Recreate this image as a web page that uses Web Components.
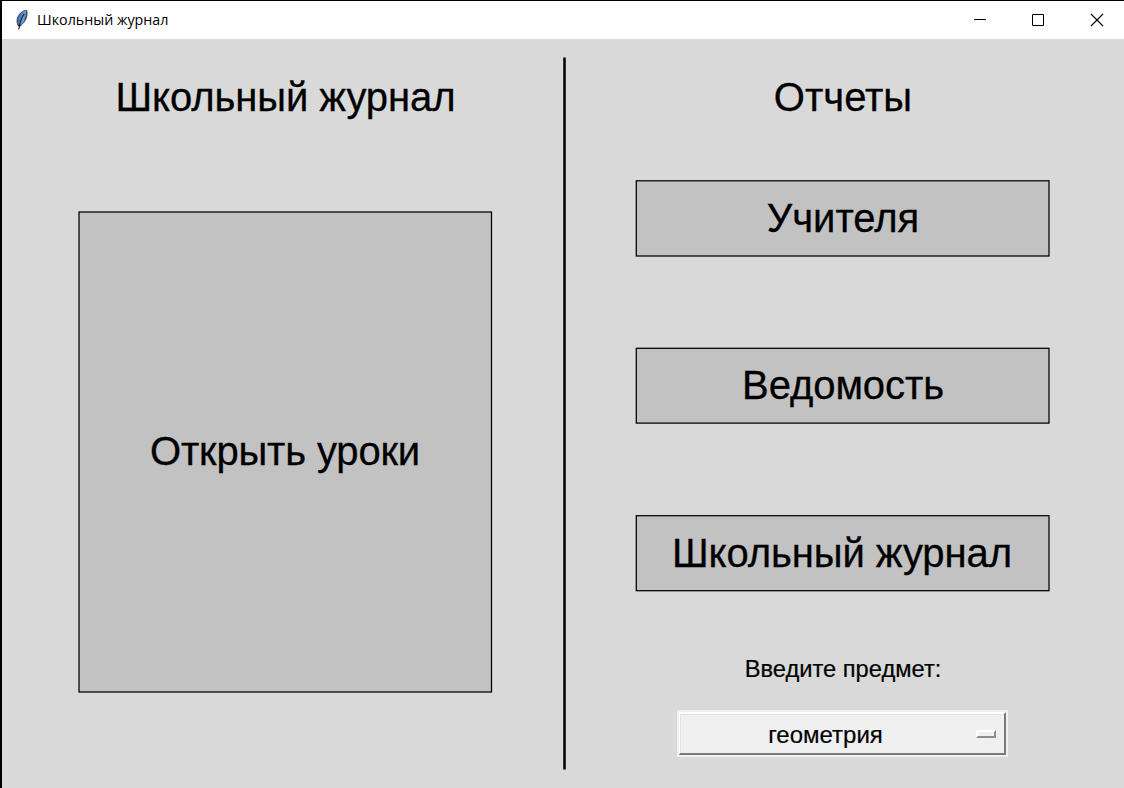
<!DOCTYPE html>
<html lang="ru"><head><meta charset="utf-8"><title>Школьный журнал</title>
<style>html,body{margin:0;height:100%}body{overflow:hidden;font-family:"Liberation Sans",Arial,sans-serif;color:#000}</style></head>
<body><journal-window></journal-window>
<script>
const define=(name,html)=>customElements.define(name,class extends HTMLElement{
 constructor(){super();const t=document.createElement('template');t.innerHTML=html;this.attachShadow({mode:'open'}).append(t.content.cloneNode(true));}
});
define('title-bar',`<style>
:host{display:flex;height:38px;background:#fff;align-items:center;font:14.25px "Open Sans",sans-serif}
.feather{width:14px;height:22px;margin-left:13px}
.name{margin-left:8px;flex:1;white-space:nowrap;padding-bottom:2px}
.ctl{width:58px;height:38px;display:block}
.last{width:57px}
</style>
<svg class="feather" viewBox="0 0 14 22"><defs><linearGradient id="g" x1="0" x2="1" y1="0" y2=".35"><stop offset="0" stop-color="#34465c"/><stop offset=".45" stop-color="#4684cc"/><stop offset=".75" stop-color="#71a7e0"/><stop offset="1" stop-color="#333"/></linearGradient></defs>
<path d="M3.2 16.5C.8 12.5 2.3 7 6 3.6 7.800 2 10 1.300 11.800 1.400c.9 4-.2 8.600-3 12-1.500 1.900-2.800 3.100-4.300 3.700z" fill="url(#g)" stroke="#3a3f48" stroke-width=".9"/><path d="M3.800 20.500C4.300 15 6 10 9.300 4.800" fill="none" stroke="#16202c" stroke-width="1.100"/><path d="M2.600 15.500l1.900 2.800 1.800-2.300z" fill="#222"/></svg>
<span class="name"><slot></slot></span>
<svg class="ctl" viewBox="0 0 58 38"><path d="M23 18.5h12" stroke="#000"/></svg>
<svg class="ctl" viewBox="0 0 58 38"><path d="M23.5 13.5h11v11h-11z" fill="none" stroke="#000"/></svg>
<svg class="ctl last" viewBox="0 0 57 38"><path d="M24 13l12 12M36 13l-12 12" stroke="#000" stroke-width="1.1"/></svg>`);
define('big-heading',`<style>:host{display:block;height:46px;line-height:46px;font-size:40px;white-space:nowrap;text-align:center;-webkit-text-stroke:.3px #000}</style><slot></slot>`);
define('flat-button',`<style>
:host{display:grid;box-sizing:border-box;width:414px;place-items:center;font-size:40px;line-height:46px;white-space:nowrap;-webkit-text-stroke:.3px #000}
svg,.label{grid-area:1/1}
.label{padding-bottom:2px}
svg{width:100%;height:100%;overflow:visible;min-height:0}
rect{x:var(--x,.3px);y:var(--y,.8px);width:var(--w,412.7px);height:var(--h,75.2px);fill:#c2c2c2;stroke:#000;stroke-width:1.25px}
</style><svg><rect/></svg><span class="label"><slot></slot></span>`);
define('option-menu',`<style>
:host{display:flex;box-sizing:border-box;width:331px;height:47px;align-items:center;background:#f0f0f0;padding:2px;font-size:24px;-webkit-text-stroke:.2px #000}
.face{display:flex;align-items:center;box-sizing:border-box;width:100%;height:100%;border:solid;border-width:2px 2.5px 2px 1px;border-color:#fff #7a7a7a #7a7a7a #fff;box-shadow:inset 1px 1px #e3e3e3}
.label{flex:1;text-align:center;padding:2px 4px 0 0}
.mark{box-sizing:border-box;width:20px;height:8px;margin-right:8px;border:2px solid;border-color:#fff #8d8d8d #8d8d8d #fff}
</style><div class="face"><span class="label"><slot></slot></span><span class="mark"></span></div>`);
define('journal-window',`<style>
:host{display:flex;flex-direction:column;box-sizing:border-box;width:1124px;height:788px;border:solid #000;border-width:1px 0 0 2px;background:#d9d9d9}
main{display:flex;flex:1}
.left{width:414px;padding:35px 0 0 76px}
.left flat-button{height:481px;margin-top:91px;--x:1px;--y:1px;--w:412.5px;--h:480px;letter-spacing:-.15px}
.left big-heading{letter-spacing:-.08px;text-indent:1px}
.rule{width:3px;height:713px;margin:18px 70px 0 71px}
.right{width:414px;display:flex;flex-direction:column;align-items:center;padding-top:35px}
.right flat-button{height:77px}
.first{margin-top:60px}
.right .second{margin-top:91px;height:76px;--y:.3px;--h:74.8px;letter-spacing:-.08px}
.third{margin-top:91px;--y:.7px;--h:75px;letter-spacing:-.08px;text-indent:-2px}
.ask{font-size:23.7px;line-height:28px;margin:63px 0 27px;-webkit-text-stroke:.2px #000}
option-menu{margin-right:2px}
</style>
<title-bar>Школьный журнал</title-bar>
<main><section class="left"><big-heading>Школьный журнал</big-heading><flat-button>Открыть уроки</flat-button></section>
<svg class="rule" viewBox="0 0 3 713"><path d="M1.500 .4v712" stroke="#000" stroke-width="2.500"/></svg>
<section class="right"><big-heading>Отчеты</big-heading><flat-button class="first">Учителя</flat-button><flat-button class="second">Ведомость</flat-button><flat-button class="third">Школьный журнал</flat-button><div class="ask">Введите предмет:</div><option-menu>геометрия</option-menu></section></main>`);
</script></body></html>
